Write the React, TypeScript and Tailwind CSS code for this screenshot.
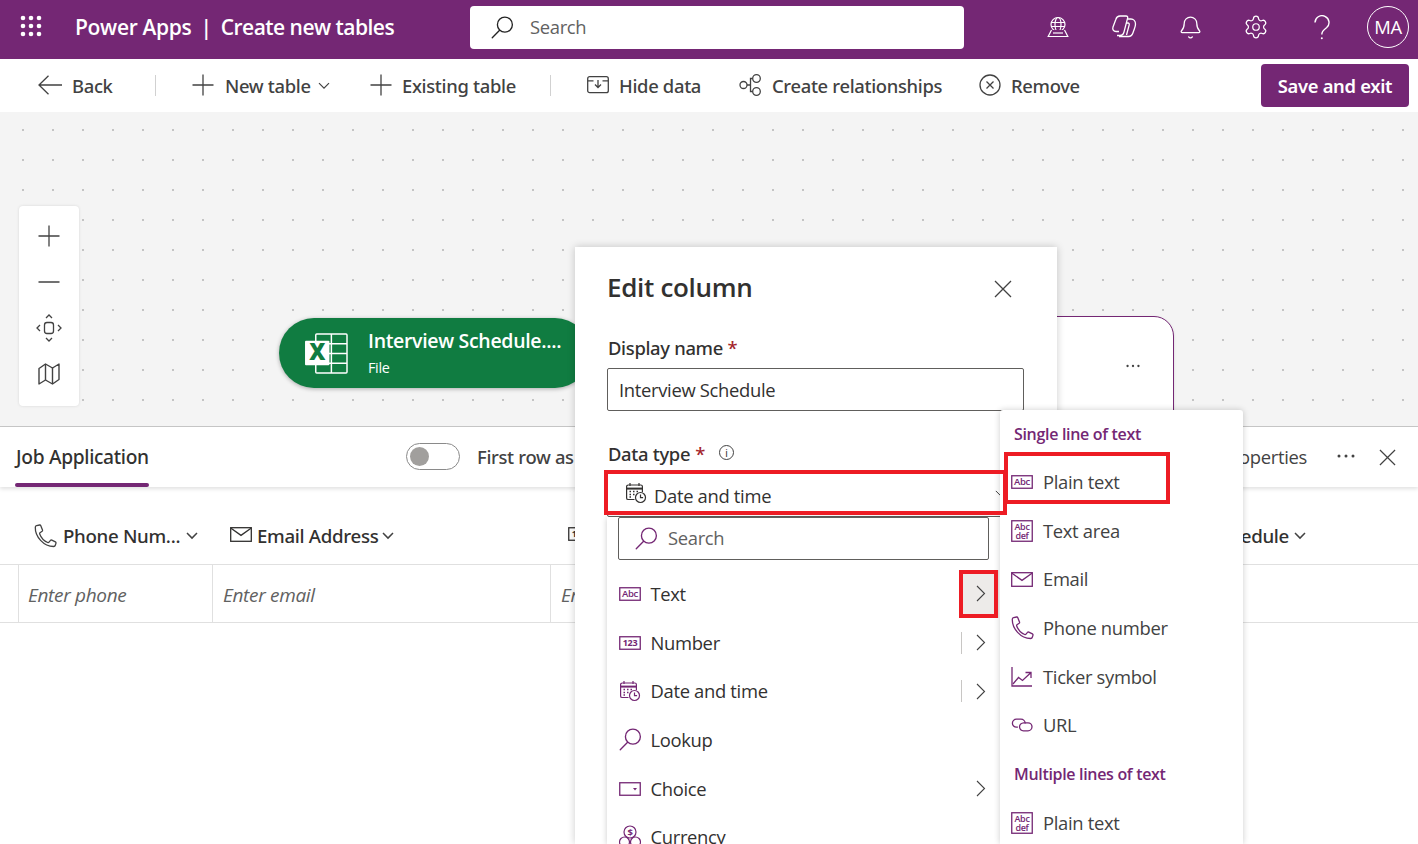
import React from "react";
import { Bell, Settings } from "lucide-react";

const P = "#742774";
const G = "#424242";

const PlusI = ({ s = 22, c = G }: { s?: number; c?: string }) => (
  <svg width={s} height={s} viewBox="0 0 22 22" fill="none" stroke={c} strokeWidth="1.300"><path d="M11 .5v21M.5 11h21" /></svg>
);
const MinusI = ({ s = 22, c = G }: { s?: number; c?: string }) => (
  <svg width={s} height="4" viewBox="0 0 22 4" fill="none" stroke={c} strokeWidth="1.500"><path d="M.5 2h21" /></svg>
);
const XI = ({ s = 18, c = G }: { s?: number; c?: string }) => (
  <svg width={s} height={s} viewBox="0 0 18 18" fill="none" stroke={c} strokeWidth="1.300"><path d="m1 1 16 16M17 1 1 17" /></svg>
);
const BackI = () => (
  <svg width="24" height="20" viewBox="0 0 24 20" fill="none" stroke={G} strokeWidth="1.300"><path d="M1 10h23M10.500.8 1 10l9.500 9.200" /></svg>
);
const ChevD = ({ w = 12, c = G, sw = 1.2 }: { w?: number; c?: string; sw?: number }) => (
  <svg width={w} height={w * 0.6} viewBox="0 0 12 7" fill="none" stroke={c} strokeWidth={sw}><path d="m1 1 5 5 5-5" /></svg>
);
const ChevR = () => (
  <svg width="10" height="17" viewBox="0 0 10 17" fill="none" stroke="#424242" strokeWidth="1.100"><path d="m1 1 7.500 7.500L1 16" /></svg>
);
const Dots = ({ w = 18, c = G }: { w?: number; c?: string }) => (
  <svg width={w} height="4" viewBox="0 0 18 4" fill={c}><circle cx="2" cy="2" r="1.500" /><circle cx="9" cy="2" r="1.500" /><circle cx="16" cy="2" r="1.500" /></svg>
);
const QuestionI = () => (
  <svg width="16" height="25" viewBox="0 0 16 25" fill="none" stroke="#fff" strokeWidth="1.400"><path d="M1 7.500a7 6.800 0 1 1 11.500 5.200C9.500 15 7.800 16 7.800 19.500" /><circle cx="7.800" cy="23.300" r="1" fill="#fff" stroke="none" /></svg>
);

const AbcIcon = () => (
  <svg width="22" height="14" viewBox="0 0 22 14">
    <rect x="0.750" y="0.750" width="20.500" height="12.500" fill="none" stroke={P} strokeWidth="1.300" />
    <text x="11" y="10" textAnchor="middle" fontSize="9.500" fontWeight="600" fill={P} fontFamily="Open Sans">Abc</text>
  </svg>
);
const N123Icon = ({ c = P }: { c?: string }) => (
  <svg width="22" height="14" viewBox="0 0 22 14">
    <rect x="0.750" y="0.750" width="20.500" height="12.500" fill="none" stroke={c} strokeWidth="1.300" />
    <text x="11" y="10" textAnchor="middle" fontSize="9" fontWeight="700" fill={c} fontFamily="Open Sans">123</text>
  </svg>
);
const AbcDefIcon = () => (
  <svg width="22" height="22" viewBox="0 0 22 22">
    <rect x="0.750" y="0.750" width="20.500" height="20.500" fill="none" stroke={P} strokeWidth="1.300" />
    <text x="11" y="9.500" textAnchor="middle" fontSize="9" fontWeight="600" fill={P} fontFamily="Open Sans">Abc</text>
    <text x="11" y="18.500" textAnchor="middle" fontSize="9" fontWeight="600" fill={P} fontFamily="Open Sans">def</text>
  </svg>
);
const CalIcon = ({ c = P }: { c?: string }) => (
  <svg width="22" height="22" viewBox="0 0 22 22" fill="none" stroke={c} strokeWidth="1.200">
    <path d="M9.500 17.500H3.200a1.600 1.600 0 0 1-1.600-1.600V4.600A1.600 1.600 0 0 1 3.200 3h12.600a1.600 1.600 0 0 1 1.600 1.600v5.600" />
    <path d="M1.800 6.600h15.400" strokeWidth="2" />
    <path d="M5 1v3M14 1v3" />
    <path d="M4.500 9.500h1.500M8 9.500h1.500M11.500 9.500h1.500M4.500 12.500h1.500M8 12.500h1.500M4.500 15h1.500" strokeWidth="1.400" />
    <circle cx="15.500" cy="15.500" r="5" fill="#fff" />
    <path d="M15.500 12.500v3.200h2.600" />
  </svg>
);
const MagIcon = ({ size = 24, c = P }: { size?: number; c?: string }) => (
  <svg width={size} height={size} viewBox="0 0 24 24" fill="none" stroke={c} strokeWidth="1.400">
    <circle cx="14.500" cy="9" r="7.800" />
    <path d="M9 14.800 1.300 22.700" strokeLinecap="round" />
  </svg>
);
const ChoiceIcon = () => (
  <svg width="22" height="14" viewBox="0 0 22 14">
    <rect x="0.750" y="0.750" width="20.500" height="12.500" fill="none" stroke={P} strokeWidth="1.300" />
    <path d="M14 6h4l-2 2.400z" fill={P} />
  </svg>
);
const CurrencyIcon = () => (
  <svg width="22" height="24" viewBox="0 0 22 24" fill="none" stroke={P} strokeWidth="1.200">
    <circle cx="11" cy="7" r="6" />
    <circle cx="5.500" cy="17" r="5" />
    <circle cx="16.500" cy="17" r="5" />
    <text x="11" y="10.500" textAnchor="middle" fontSize="9.500" fontWeight="700" fill={P} stroke="none" fontFamily="Open Sans">$</text>
  </svg>
);
const MailIcon = ({ c = P }: { c?: string }) => (
  <svg width="22" height="15" viewBox="0 0 22 15" fill="none" stroke={c} strokeWidth="1.300">
    <rect x="0.700" y="0.700" width="20.600" height="13.600" />
    <path d="M1 1.200 11 8.400 21 1.200" />
  </svg>
);
const PhoneIcon = ({ c = P }: { c?: string }) => (
  <svg width="23" height="24" viewBox="0 0 23 24" fill="none" stroke={c} strokeWidth="1.300" strokeLinejoin="round">
    <path d="M2.600 1.600 5.600 1c.6-.1 1 .2 1.200.7l1.700 4.300c.2.5 0 1-.4 1.300L6 8.700c-.4.3-.5.7-.3 1.200 1.500 4 4.400 7 8 8.600.5.2 1 .1 1.300-.3l1.500-1.800c.3-.4.8-.5 1.300-.3l3.600 1.800c.5.3.7.7.6 1.200l-.7 2.200c-.2.7-.8 1.200-1.600 1.200C9.600 22.500 1 12.500 1.300 3.200c0-.8.500-1.400 1.300-1.600z" />
  </svg>
);
const TickerIcon = () => (
  <svg width="21" height="20" viewBox="0 0 21 20" fill="none" stroke={P} strokeWidth="1.300">
    <path d="M1 0v19h20" />
    <path d="M2 17l5.500-6.500 4 3L19.500 6M14.500 5.500h5.500V11" />
  </svg>
);
const LinkIcon = () => (
  <svg width="22" height="14" viewBox="0 0 22 14" fill="none" stroke={P} strokeWidth="1.300">
    <path d="M6.500 8.800H5a4 4 0 0 1 0-8h4.500a4.300 4.300 0 0 1 4.300 4.200" transform="translate(.4 .4)" />
    <path d="M8.500 9a4.300 4.300 0 0 1 4.200-4.200h4.300a4 4 0 0 1 0 8h-4.500A4.300 4.300 0 0 1 8.500 9z" />
  </svg>
);
const Waffle = () => (
  <svg width="22" height="22" viewBox="0 0 22 22" fill="#fff">
    {[3, 11, 19].map((y) => [3, 11, 19].map((x) => <circle key={`${x}-${y}`} cx={x} cy={y} r="2.300" />))}
  </svg>
);
const EnvIcon = () => (
  <svg width="22" height="22" viewBox="0 0 22 22" fill="none" stroke="#fff" strokeWidth="1.200">
    <circle cx="11" cy="8.500" r="7" />
    <ellipse cx="11" cy="8.500" rx="3" ry="7" />
    <path d="M4.200 6.500h13.600M4.200 10.500h13.600" />
    <path d="M4.500 14 1.200 20.500h19.600L17.500 14" fill="#742774" />
    <path d="M6 17h10" />
  </svg>
);
const CopilotIcon = () => (
  <svg width="26" height="24" viewBox="0 0 26 24" fill="none" stroke="#fff" strokeWidth="1.300" strokeLinejoin="round">
    <path d="M9 1h6c1.500 0 2 1 1.600 2.200L13 17c-.5 2-2 3.500-4 3.500H6" />
    <path d="M9 1C6.500 1 5.400 2.500 4.900 4.200L2 12c-.8 2.500.5 4.500 3 4.500h3" />
    <path d="M16.500 4h3.500c2.500 0 4.500 2 4.500 5 0 1.500-.4 3-1 4.500l-1.600 4.500c-.8 2.300-2.400 3.500-4.400 3.500H8" />
    <path d="M15 8h2c1 0 1.500.8 1.200 1.800L15.500 20" />
  </svg>
);
const HideIcon = () => (
  <svg width="22" height="18" viewBox="0 0 22 18" fill="none" stroke={G} strokeWidth="1.300">
    <rect x="0.700" y="0.700" width="20.600" height="16" rx="2" />
    <path d="M1 4.800h5.500M15.500 4.800H21" />
    <path d="M11 4v7M8 8.500l3 3 3-3" />
  </svg>
);
const RelIcon = () => (
  <svg width="23" height="22" viewBox="0 0 23 22" fill="none" stroke={G} strokeWidth="1.300">
    <circle cx="4.500" cy="11" r="3.500" />
    <circle cx="17.500" cy="4.500" r="3.800" />
    <circle cx="17.500" cy="17.500" r="3.800" />
    <path d="M8 11h3.500M11.500 11V4.500h2.200M11.500 11v6.500h2.200" />
  </svg>
);
const RemoveIcon = () => (
  <svg width="22" height="22" viewBox="0 0 22 22" fill="none" stroke={G} strokeWidth="1.300">
    <circle cx="11" cy="11" r="10" />
    <path d="m7.500 7.500 7 7M14.500 7.500l-7 7" />
  </svg>
);
const FitIcon = () => (
  <svg width="26" height="28" viewBox="0 0 26 28" fill="none" stroke={G} strokeWidth="1.300">
    <rect x="8.500" y="8.500" width="9" height="11" rx="2.500" />
    <path d="m10 4 3-3 3 3M10 24l3 3 3-3M4 11l-3 3 3 3M22 11l3 3-3 3" />
  </svg>
);
const MapI = () => (
  <svg width="22" height="22" viewBox="0 0 22 22" fill="none" stroke={G} strokeWidth="1.400" strokeLinejoin="round">
    <path d="M1 5.500 7.500 1 14.500 5 21 1v15.500L14.500 21l-7-4L1 21z" />
    <path d="M7.500 1v16M14.500 5v16" />
  </svg>
);
const ExcelIcon = () => (
  <svg width="43" height="41" viewBox="0 0 44 42">
    <g fill="none" stroke="#fff" strokeWidth="1.500">
      <rect x="11" y="1" width="32" height="40" rx="1" />
      <path d="M27 1v40M11 11h32M11 21h32M11 31h32" />
    </g>
    <rect x="0" y="8" width="25" height="25" rx="1" fill="#fff" />
    <text x="12.500" y="28" textAnchor="middle" fontSize="23" fontWeight="800" fill="#107c41" fontFamily="Open Sans">X</text>
  </svg>
);

const ToolItem = ({ icon, label, width, chevron, gap = "w-[32px]" }: { icon: React.ReactNode; label: string; width: string; chevron?: boolean; gap?: string }) => (
  <div className={`flex items-center ${width}`}>
    <span className={`flex shrink-0 items-center ${gap}`}>{icon}</span>
    <span>{label}</span>
    {chevron && <span className="ml-[7px]"><ChevD /></span>}
  </div>
);

const MenuRow = ({ icon, label, sep, chev, hot }: { icon: React.ReactNode; label: string; sep?: boolean; chev?: boolean; hot?: boolean }) => (
  <div className="flex h-[48.700px] items-center pl-[12px] text-[18.400px] text-[#323130]">
    <span className="flex w-[31.500px] shrink-0 items-center">{icon}</span>
    <span className="flex-1">{label}</span>
    {sep && <span className="h-[22px] w-px bg-[#c8c6c4]" />}
    {chev && (
      <span className={`mr-[1px] flex h-full w-[37px] items-center justify-center ${hot ? "bg-[#edebe9]" : ""}`}>
        <ChevR />
      </span>
    )}
  </div>
);

const FlyRow = ({ icon, label }: { icon: React.ReactNode; label: string }) => (
  <div className="flex h-[48.700px] items-center pl-[11px] text-[18.400px] text-[#424242]">
    <span className="flex w-[32px] shrink-0 items-center">{icon}</span>
    <span>{label}</span>
  </div>
);

export default function App() {
  return (
    <div className="relative flex h-screen w-full flex-col overflow-hidden bg-white font-['Open_Sans',sans-serif] tracking-[-0.02em] text-[#323130]">
      {/* Header */}
      <header className="grid h-[59px] shrink-0 grid-cols-[470px_494px_1fr] items-center bg-[#742774] pb-[5px] text-white">
        <div className="flex items-center pl-[20px]">
          <span className="mb-[3px] flex"><Waffle /></span>
          <div className="mt-[2px] flex items-center text-[21px] font-semibold">
            <span className="ml-[33px]">Power Apps</span>
            <span className="ml-[9px]">|</span>
            <span className="ml-[9px] tracking-[-0.025em]">Create new tables</span>
          </div>
        </div>
        <div className="flex h-[43px] items-center rounded-[4px] bg-white pl-[21px] text-[#616161]">
          <MagIcon size={23} c="#242424" />
          <span className="ml-[16px] text-[18.400px]">Search</span>
        </div>
        <div className="flex items-center justify-end pr-[9px]">
          <span className="flex w-[66px] justify-center"><EnvIcon /></span>
          <span className="flex w-[66px] justify-center"><CopilotIcon /></span>
          <span className="flex w-[66px] justify-center"><Bell size={25} strokeWidth={1.200} /></span>
          <span className="flex w-[66px] justify-center"><Settings size={26} strokeWidth={1.150} /></span>
          <span className="flex w-[66px] justify-center"><QuestionI /></span>
          <span className="ml-[12px] flex h-[42px] w-[42px] items-center justify-center rounded-full border border-white text-[18.400px]">MA</span>
        </div>
      </header>

      {/* Toolbar */}
      <div className="flex h-[53px] shrink-0 items-center pl-[38px] font-['Noto_Sans',sans-serif] text-[18.400px] font-medium text-[#424242]">
        <ToolItem width="w-[117px]" gap="w-[34px]" icon={<BackI />} label="Back" />
        <span className="h-[21px] w-px bg-[#d1d1d1]" />
        <span className="w-[36px]" />
        <ToolItem width="w-[178px]" gap="w-[33px]" icon={<PlusI />} label="New table" chevron />
        <ToolItem width="w-[180px]" gap="w-[32px]" icon={<PlusI />} label="Existing table" />
        <span className="h-[21px] w-px bg-[#d1d1d1]" />
        <span className="w-[36px]" />
        <ToolItem width="w-[152px]" icon={<HideIcon />} label="Hide data" />
        <ToolItem width="w-[240px]" gap="w-[33px]" icon={<RelIcon />} label="Create relationships" />
        <ToolItem width="w-[282px]" icon={<RemoveIcon />} label="Remove" />
        <button className="flex h-[43px] w-[148px] items-center justify-center rounded-[4px] bg-[#742774] font-semibold text-white">Save and exit</button>
      </div>

      {/* Canvas */}
      <div className="relative h-[314px] shrink-0 bg-[#f4f4f4] bg-[radial-gradient(circle,#c4c4c4_1px,transparent_1.500px)] bg-[size:30px_30px] bg-[position:8px_3px]">
        <div className="absolute left-[19px] top-[94px] flex h-[200px] w-[60px] flex-col items-center rounded-[4px] bg-white pt-[7px] shadow-[0_0_3px_rgba(0,0,0,0.12)]">
          <span className="flex h-[46px] items-center"><PlusI /></span>
          <span className="flex h-[46px] items-center"><MinusI /></span>
          <span className="flex h-[46px] items-center"><FitIcon /></span>
          <span className="flex h-[46px] items-center"><MapI /></span>
        </div>
        <div className="absolute left-[279px] top-[206px] flex h-[70px] w-[311px] items-center rounded-[35px] bg-[#107c41] pl-[26px] text-white shadow-[0_1px_4px_rgba(0,0,0,0.3)]">
          <ExcelIcon />
          <div className="ml-[20px] flex flex-col">
            <span className="-mt-[1px] text-[19.500px] font-semibold leading-[26px]">Interview Schedule....</span>
            <span className="mt-[4px] text-[14.400px] leading-[20px]">File</span>
          </div>
        </div>
        <div className="absolute left-[1000px] top-[204px] h-[120px] w-[174px] rounded-tr-[20px] border border-[#742774] bg-white shadow-sm">
          <span className="absolute left-[125px] top-[47px] flex"><Dots w={14} /></span>
        </div>
      </div>

      {/* Bottom panel */}
      <div className="flex min-h-0 flex-1 flex-col border-t border-[#c8c8c8] bg-white">
        <div className="flex h-[60px] shrink-0 items-center pl-[15px] pr-[22px] shadow-[0_2px_4px_rgba(0,0,0,0.12)]">
          <div className="relative flex h-full w-[391px] items-center font-['Noto_Sans',sans-serif]">
            <span className="ml-[1px] text-[19.200px] font-medium text-[#323130]">Job Application</span>
            <span className="absolute bottom-0 left-0 h-[4px] w-[134px] rounded-[2px] bg-[#742774]" />
          </div>
          <span className="mb-[2px] flex h-[27px] w-[54px] items-center rounded-full border border-[#8a8a8a] pl-[3px]">
            <span className="h-[19px] w-[19px] rounded-full bg-[#a19f9d]" />
          </span>
          <span className="ml-[17px] font-['Noto_Sans',sans-serif] text-[18.400px] font-medium text-[#424242]">First row as header</span>
          <span className="ml-auto text-[18.400px] text-[#424242]">Edit table properties</span>
          <span className="ml-[30px] mb-[3px] flex"><Dots w={18} /></span>
          <span className="ml-[24px] flex"><XI s={17} /></span>
        </div>
        <div className="flex h-[78px] shrink-0 items-center border-b border-[#e0e0e0] pt-[21px] font-['Noto_Sans',sans-serif] text-[18.700px] font-medium text-[#323130]">
          <div className="flex w-[212px] items-center pl-[34px]">
            <PhoneIcon c={G} />
            <span className="ml-[6px]">Phone Num...</span>
            <span className="ml-[6px]"><ChevD sw={1.500} /></span>
          </div>
          <div className="flex w-[338px] items-center pl-[18px]">
            <span className="mb-[3px] flex"><MailIcon c="#323130" /></span>
            <span className="ml-[5px]">Email Address</span>
            <span className="ml-[4px]"><ChevD sw={1.500} /></span>
          </div>
          <div className="flex flex-1 items-center justify-between pl-[18px] pr-[112px]">
            <span className="mb-[3px] flex"><N123Icon c="#323130" /></span>
            <div className="flex items-center">
              <span>Interview Schedule</span>
              <span className="ml-[5px]"><ChevD sw={1.500} /></span>
            </div>
          </div>
        </div>
        <div className="flex h-[58px] shrink-0 items-stretch border-b border-[#e0e0e0] text-[19px] italic text-[#616161]">
          <div className="w-[18px] shrink-0" />
          <div className="flex w-[194px] items-center border-l border-[#e0e0e0] pl-[9px] pt-[4px]">Enter phone</div>
          <div className="flex w-[338px] items-center border-l border-[#e0e0e0] pl-[10px] pt-[4px]">Enter email</div>
          <div className="flex flex-1 items-center border-l border-[#e0e0e0] pl-[10px] pt-[4px]">Enter</div>
        </div>
      </div>

      {/* Edit column panel */}
      <div className="absolute left-[575px] top-[247px] h-[597px] w-[482px] bg-white shadow-[0_0_8px_rgba(0,0,0,0.2)]">
        <div className="flex items-center justify-between pl-[32px] pr-[45px] pt-[22px]">
          <span className="text-[26px] font-semibold leading-[36px] text-[#323130]">Edit column</span>
          <span className="mt-[4px] flex"><XI /></span>
        </div>
        <div className="mt-[31px] pl-[33px] font-['Noto_Sans',sans-serif] text-[18.400px] font-medium leading-[24px] text-[#323130]">
          Display name <span className="text-[#a4262c]">*</span>
        </div>
        <div className="ml-[32px] mt-[8px] flex h-[43px] w-[417px] items-center rounded-[2px] border border-[#605e5c] pl-[11px] text-[18.400px]">Interview Schedule</div>
        <div className="mt-[31px] flex items-center pl-[33px] font-['Noto_Sans',sans-serif] text-[18.400px] font-medium leading-[24px]">
          Data type <span className="ml-[5px] text-[#a4262c]">*</span>
          <span className="mb-[3px] ml-[14px] flex h-[15px] w-[15px] items-center justify-center rounded-full border border-[#424242] text-[10px] font-normal">i</span>
        </div>
        <div className="ml-[32px] mt-[5px] flex h-[46px] w-[417px] items-start rounded-[2px] border border-[#605e5c] pl-[17px] pt-[10px] text-[18.400px]">
          <div className="flex flex-1 items-start gap-[7px]">
            <CalIcon c="#323130" />
            <span className="mt-[2px] leading-[24px]">Date and time</span>
          </div>
          <span className="mr-[18px] mt-[8px]"><ChevD w={10} /></span>
        </div>
        {/* type menu */}
        <div className="absolute left-[32px] top-[270px] h-[327px] w-[393px] bg-white shadow-[0_1px_6px_rgba(0,0,0,0.2)]">
          <div className="mx-[11px] flex h-[43px] w-[371px] items-center rounded-[2px] border border-[#605e5c] pl-[16px] text-[18.400px] text-[#616161]">
            <MagIcon size={23} />
            <span className="ml-[10px] -mt-[1px]">Search</span>
          </div>
          <div className="mt-[9.500px]">
            <MenuRow icon={<AbcIcon />} label="Text" chev hot />
            <MenuRow icon={<N123Icon />} label="Number" sep chev />
            <MenuRow icon={<CalIcon />} label="Date and time" sep chev />
            <MenuRow icon={<MagIcon size={23} />} label="Lookup" />
            <MenuRow icon={<ChoiceIcon />} label="Choice" chev />
            <MenuRow icon={<CurrencyIcon />} label="Currency" />
          </div>
        </div>
      </div>

      {/* Flyout */}
      <div className="absolute left-[1000px] top-[410px] h-[434px] w-[243px] rounded-t-[3px] bg-white pt-[11px] shadow-[0_0_6px_rgba(0,0,0,0.2)]">
        <div className="pl-[14px] text-[16px] font-semibold leading-[26px] text-[#742774]">Single line of text</div>
        <div className="mt-[10.500px]">
          <FlyRow icon={<AbcIcon />} label="Plain text" />
          <FlyRow icon={<AbcDefIcon />} label="Text area" />
          <FlyRow icon={<MailIcon />} label="Email" />
          <FlyRow icon={<PhoneIcon />} label="Phone number" />
          <FlyRow icon={<TickerIcon />} label="Ticker symbol" />
          <FlyRow icon={<LinkIcon />} label="URL" />
        </div>
        <div className="flex h-[48.700px] items-center pl-[14px] text-[16px] font-semibold text-[#742774]">Multiple lines of text</div>
        <FlyRow icon={<AbcDefIcon />} label="Plain text" />
      </div>

      {/* Red annotation boxes */}
      <div className="absolute left-[604px] top-[470px] h-[45px] w-[403px] border-[4px] border-[#ed1c24]" />
      <div className="absolute left-[1004px] top-[452px] h-[52px] w-[166px] border-[4px] border-[#ed1c24]" />
      <div className="absolute left-[959px] top-[570px] h-[48px] w-[39px] border-[4px] border-[#ed1c24]" />
    </div>
  );
}
